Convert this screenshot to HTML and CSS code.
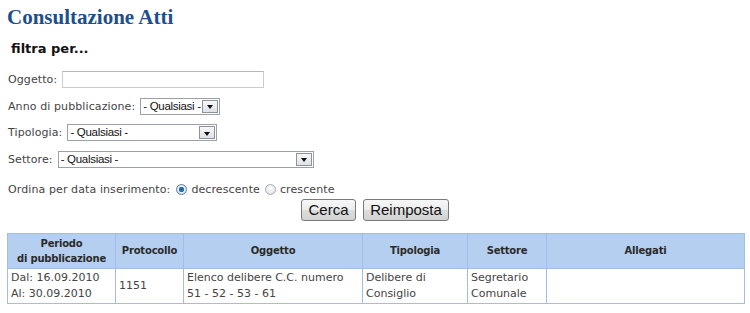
FILE: index.html
```html
<!DOCTYPE html>
<html lang="it">
<head>
<meta charset="utf-8">
<title>Consultazione Atti</title>
<link rel="stylesheet" href="styles.css">
</head>
<body>
<div class="page">
  <h1 class="title">Consultazione Atti</h1>
  <h2 class="subtitle">filtra per...</h2>
  <form class="filters">
    <div class="row">
      <label>Oggetto:</label>
      <span class="textbox"></span>
    </div>
    <div class="row">
      <label>Anno di pubblicazione:</label>
      <span class="select w-anno"><span class="sel-text">- Qualsiasi -</span><span class="sel-btn"><span class="arrow"></span></span></span>
    </div>
    <div class="row">
      <label>Tipologia:</label>
      <span class="select w-tipo"><span class="sel-text">- Qualsiasi -</span><span class="sel-btn"><span class="arrow"></span></span></span>
    </div>
    <div class="row">
      <label>Settore:</label>
      <span class="select w-sett"><span class="sel-text">- Qualsiasi -</span><span class="sel-btn"><span class="arrow"></span></span></span>
    </div>
    <div class="row row-order">
      <label>Ordina per data inserimento:</label>
      <span class="radio checked"></span><span class="opt">decrescente</span>
      <span class="radio"></span><span class="opt">crescente</span>
    </div>
    <div class="buttons">
      <span class="btn btn-cerca">Cerca</span>
      <span class="btn btn-reset">Reimposta</span>
    </div>
  </form>
  <table class="results">
    <colgroup>
      <col class="c1"><col class="c2"><col class="c3"><col class="c4"><col class="c5"><col class="c6">
    </colgroup>
    <thead>
      <tr>
        <th>Periodo<br>di pubblicazione</th>
        <th>Protocollo</th>
        <th>Oggetto</th>
        <th>Tipologia</th>
        <th>Settore</th>
        <th>Allegati</th>
      </tr>
    </thead>
    <tbody>
      <tr>
        <td>Dal: 16.09.2010<br>Al: 30.09.2010</td>
        <td>1151</td>
        <td>Elenco delibere C.C. numero<br>51 - 52 - 53 - 61</td>
        <td>Delibere di<br>Consiglio</td>
        <td>Segretario<br>Comunale</td>
        <td></td>
      </tr>
    </tbody>
  </table>
</div>
</body>
</html>
```

FILE: styles.css
```css
html, body {
  margin: 0;
  padding: 0;
  background: #ffffff;
}

.page {
  padding: 5px 7px 0 7px;
  font-family: "DejaVu Sans", Verdana, sans-serif;
  font-size: 11px;
  color: #444;
}

.title {
  margin: 0;
  font-family: "Liberation Serif", Georgia, serif;
  font-weight: bold;
  font-size: 21px;
  line-height: 24px;
  color: #1d4f8c;
}

.subtitle {
  margin: 12px 0 0 4px;
  font-family: "DejaVu Sans", Verdana, sans-serif;
  font-weight: bold;
  font-size: 13px;
  line-height: 16px;
  color: #111;
}

.filters {
  margin-top: 14px;
  padding-left: 1px;
  letter-spacing: 0.1px;
}

.row {
  display: flex;
  align-items: center;
  height: 17px;
  margin-bottom: 9.67px;
}

.row label {
  margin-right: 5px;
  white-space: nowrap;
}

.textbox {
  display: block;
  width: 200px;
  height: 15px;
  border: 1px solid #c9cdd2;
  border-top-color: #b5bac0;
  background: #fff;
}

.select {
  display: flex;
  align-items: stretch;
  height: 15px;
  border: 1px solid #9aa1a9;
  background: #fff;
  font-family: "Liberation Sans", Arial, sans-serif;
  font-size: 11.5px;
  color: #111;
  letter-spacing: -0.3px;
}

.sel-text {
  flex: 1;
  padding-left: 2px;
  line-height: 15px;
  white-space: nowrap;
}

.sel-btn {
  width: 14px;
  margin: 1px;
  border: 1px solid #8c939b;
  background: linear-gradient(#f6f7f8, #dfe2e5);
  display: flex;
  align-items: center;
  justify-content: center;
}

.arrow {
  width: 0;
  height: 0;
  border-left: 3.5px solid transparent;
  border-right: 3.5px solid transparent;
  border-top: 4px solid #111;
  margin-top: 2px;
}

.w-anno { width: 78px; }
.w-tipo { width: 148px; }
.w-sett { width: 254px; }

.row-order {
  margin-top: 14px;
  margin-bottom: 0;
  height: 16px;
}

.row-order label {
  margin-right: 6px;
}

.radio {
  width: 11px;
  height: 11px;
  border-radius: 50%;
  border: 1px solid #a8aeb5;
  background: radial-gradient(circle at 50% 40%, #ffffff, #d8dcdf);
  box-sizing: border-box;
  margin-right: 4px;
  flex: none;
}

.radio.checked {
  border-color: #5b7ea6;
  background: radial-gradient(circle, #1d5f9a 0, #2a79bb 2.5px, #e6eef6 3px, #cfd9e3 100%);
}

.opt {
  margin-right: 5px;
}

.buttons {
  display: flex;
  gap: 7px;
  padding-left: 293px;
  margin-top: 1px;
  letter-spacing: 0;
}

.btn {
  display: flex;
  align-items: center;
  justify-content: center;
  height: 20px;
  border: 1px solid #7a7a7a;
  border-radius: 3px;
  background: linear-gradient(#f7f7f7 0%, #ececec 50%, #dddddd 51%, #d2d2d2 100%);
  font-family: "Liberation Sans", Arial, sans-serif;
  font-size: 15px;
  color: #111;
}

.btn-cerca { width: 53px; }
.btn-reset { width: 84px; }

.results {
  margin-top: 12px;
  width: 737px;
  table-layout: fixed;
  border-collapse: collapse;
  border: 1px solid #a0bfe8;
}

.c1 { width: 108px; }
.c2 { width: 68px; }
.c3 { width: 179px; }
.c4 { width: 105px; }
.c5 { width: 79px; }
.c6 { width: 198px; }

.results th,
.results td {
  border: 1px solid #a0bfe8;
}

.results th {
  background: #b5cff1;
  color: #2a2a2a;
  font-weight: bold;
  font-size: 10px;
  letter-spacing: -0.2px;
  height: 34px;
  padding: 0 2px;
  text-align: center;
  line-height: 15px;
}

.results td {
  height: 34px;
  padding: 0 3px;
  line-height: 16px;
  vertical-align: middle;
  text-align: left;
  color: #444;
}
```
